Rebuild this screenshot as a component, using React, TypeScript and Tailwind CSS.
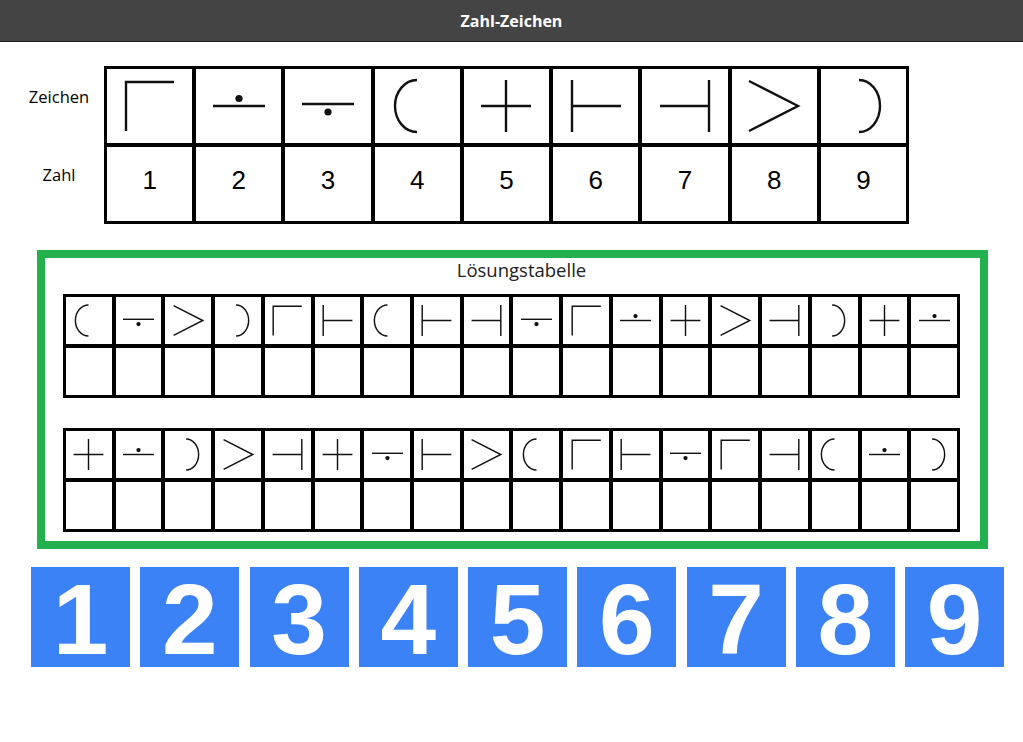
type Sym = "G" | "A" | "B" | "L" | "P" | "T" | "R" | "V" | "C";

const topSymbols: Sym[] = ["G", "A", "B", "L", "P", "T", "R", "V", "C"];

const rowOne: Sym[] = ["L", "B", "V", "C", "G", "T", "L", "T", "R", "B", "G", "A", "P", "V", "R", "C", "P", "A"];
const rowTwo: Sym[] = ["P", "A", "C", "V", "R", "P", "B", "T", "V", "L", "G", "T", "B", "G", "R", "L", "A", "C"];

function Symbol({ type, size }: { type: Sym; size: number }) {
  return (
    <svg
      width={size}
      height={size}
      viewBox="0 0 52 52"
      fill="none"
      stroke="#111"
      strokeWidth={2.4}
      className="overflow-visible"
    >
      {type === "G" && <path d="M2 51 V2 H50" />}
      {type === "A" && (
        <>
          <path d="M0 26 H52" />
          <circle cx="26" cy="18.5" r="3.6" fill="#111" stroke="none" />
        </>
      )}
      {type === "B" && (
        <>
          <path d="M0 24 H52" />
          <circle cx="26" cy="32" r="3.6" fill="#111" stroke="none" />
        </>
      )}
      {type === "L" && <path d="M26 0 A22 26 0 0 0 26 52" />}
      {type === "P" && <path d="M1 26 H51 M26 0 V52" />}
      {type === "T" && <path d="M2 0 V52 M2 26 H51" />}
      {type === "R" && <path d="M1 26 H50 M50 0 V52" />}
      {type === "V" && <path d="M1 1 L50 26 L1 51" />}
      {type === "C" && <path d="M22 0 A21 26 0 0 1 22 52" />}
    </svg>
  );
}

function SolutionTable({ symbols }: { symbols: Sym[] }) {
  return (
    <div className="grid w-[897px] grid-cols-[repeat(18,minmax(0,1fr))] gap-[4px] bg-black p-[3px]">
      {symbols.map((s, i) => (
        <div key={"s" + i} className="flex h-[47px] items-center justify-center bg-white">
          <Symbol type={s} size={31} />
        </div>
      ))}
      {symbols.map((_, i) => (
        <div key={"e" + i} className="h-[47px] bg-white" />
      ))}
    </div>
  );
}

export default function App() {
  return (
    <div className="min-h-[742px] bg-white font-['Open_Sans',sans-serif]">
      <header className="flex h-[42px] items-center justify-center border-b border-[#1c1c1c] bg-[#444444]">
        <h1 className="text-[16px] font-bold text-white">Zahl-Zeichen</h1>
      </header>

      {/* Legende */}
      <div className="mt-[24px] flex pl-[18px]">
        <div className="mr-[4px] flex w-[82px] flex-col text-[16.5px] leading-[22px] text-black">
          <div className="h-[78px] pt-[20px] text-center">Zeichen</div>
          <div className="h-[79px] pt-[20px] text-center">Zahl</div>
        </div>
        <div className="grid w-[805px] grid-cols-9 gap-[4px] bg-black p-[3px]">
          {topSymbols.map((s, i) => (
            <div key={"t" + i} className="flex h-[74px] items-center justify-center bg-white">
              <Symbol type={s} size={52} />
            </div>
          ))}
          {topSymbols.map((_, i) => (
            <div
              key={"n" + i}
              className="flex h-[74px] items-center justify-center bg-white pb-[8px] font-['Liberation_Sans',Arial,sans-serif] text-[26px] text-black"
            >
              {i + 1}
            </div>
          ))}
        </div>
      </div>

      {/* Lösungstabelle */}
      <div className="ml-[37px] mt-[26px] w-[951px] border-[8px] border-[#22b14c] pb-[9px] pl-[18px]">
        <div className="h-[25px] text-center text-[18.5px] leading-[24px] text-[#222]">Lösungstabelle</div>
        <div className="mt-[11px]">
          <SolutionTable symbols={rowOne} />
        </div>
        <div className="mt-[30px]">
          <SolutionTable symbols={rowTwo} />
        </div>
      </div>

      {/* Zahlen */}
      <div className="mt-[18px] flex gap-[10.25px] pl-[31px]">
        {[1, 2, 3, 4, 5, 6, 7, 8, 9].map((n) => (
          <div
            key={n}
            className="flex h-[100px] w-[99px] items-center justify-center bg-[#3b82f6] pt-[3px] font-['Liberation_Sans',Arial,sans-serif] text-[100px] font-bold leading-none text-white"
          >
            {n}
          </div>
        ))}
      </div>
    </div>
  );
}
